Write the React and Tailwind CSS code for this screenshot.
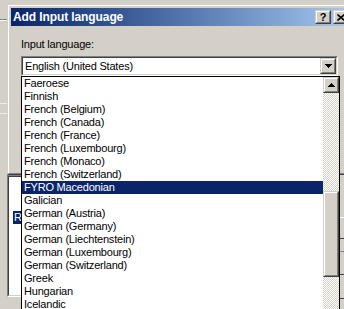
const languages = [
  "Faeroese",
  "Finnish",
  "French (Belgium)",
  "French (Canada)",
  "French (France)",
  "French (Luxembourg)",
  "French (Monaco)",
  "French (Switzerland)",
  "FYRO Macedonian",
  "Galician",
  "German (Austria)",
  "German (Germany)",
  "German (Liechtenstein)",
  "German (Luxembourg)",
  "German (Switzerland)",
  "Greek",
  "Hungarian",
  "Icelandic",
  "Indonesian",
];

const selected = "FYRO Macedonian";

// classic win2k raised edge: two nested 1px borders
const Raised = ({ className = "", children }) => (
  <div className={`border border-t-[#d4d0c8] border-l-[#d4d0c8] border-r-[#404040] border-b-[#404040] bg-[#d4d0c8] ${className}`}>
    <div className="w-full h-full border border-t-white border-l-white border-r-[#808080] border-b-[#808080] flex items-center justify-center">
      {children}
    </div>
  </div>
);

const Triangle = ({ up }) => (
  <svg width="7" height="4" viewBox="0 0 7 4" shapeRendering="crispEdges">
    {up ? (
      <g fill="#000">
        <rect x="3" y="0" width="1" height="1" />
        <rect x="2" y="1" width="3" height="1" />
        <rect x="1" y="2" width="5" height="1" />
        <rect x="0" y="3" width="7" height="1" />
      </g>
    ) : (
      <g fill="#000">
        <rect x="0" y="0" width="7" height="1" />
        <rect x="1" y="1" width="5" height="1" />
        <rect x="2" y="2" width="3" height="1" />
        <rect x="3" y="3" width="1" height="1" />
      </g>
    )}
  </svg>
);

const checker =
  "bg-[repeating-conic-gradient(#d4d0c8_0_25%,#ffffff_0_50%)] bg-[length:2px_2px]";

const App = () => {
  return (
    <div className="relative w-[344px] h-[309px] overflow-hidden bg-[#d4d0c8] text-black font-['Liberation_Sans',Arial,sans-serif] text-[11px] tracking-[-0.2px]">
      {/* bits of the window behind */}
      <div className="absolute left-0 top-[19px] w-[8px] h-[1px] bg-[#808080]" />
      <div className="absolute left-0 top-[20px] w-[8px] h-[1px] bg-white" />
      <div className="absolute left-0 top-[103px] w-[8px] h-[1px] bg-[#eeeeee]" />
      <div className="absolute left-0 top-[113px] w-[8px] h-[1px] bg-[#eeeeee]" />
      <div className="absolute left-[7px] top-[175px] w-[40px] h-[122px] border border-t-[#808080] border-l-[#808080] border-r-white border-b-white">
        <div className="w-full h-full bg-white border border-t-[#404040] border-l-[#404040] border-r-[#d4d0c8] border-b-[#d4d0c8] pt-[34px] pl-[4px]">
          <div className="w-[24px] h-[13px] leading-[13px] bg-[#0a246a] text-white pl-[1px]">R</div>
        </div>
      </div>
      <div className="absolute left-[340px] top-[217px] w-[4px] h-[1px] bg-white" />
      <div className="absolute left-[340px] top-[238px] w-[4px] h-[1px] bg-[#404040]" />
      <div className="absolute left-[340px] top-[251px] w-[4px] h-[1px] bg-[#808080]" />
      <div className="absolute left-[340px] top-[274px] w-[4px] h-[1px] bg-[#404040]" />
      <div className="absolute left-[340px] top-[298px] w-[4px] h-[1px] bg-[#404040]" />

      {/* Add Input language dialog */}
      <div className="absolute left-[7px] top-[4px] w-[348px] h-[171px] border border-t-[#d4d0c8] border-l-[#d4d0c8] border-r-[#404040] border-b-[#404040]">
        <div className="w-full h-full border border-t-white border-l-white border-r-[#808080] border-b-[#808080] p-[2px] flex flex-col">
          <div className="h-[18px] flex items-center pl-[2px] pr-[2px] bg-gradient-to-r from-[#0a246a] to-[#a6caf0]">
            <span className="flex-1 text-white font-bold text-[12px] tracking-[-0.1px] leading-[18px]">
              Add Input language
            </span>
            <Raised className="w-[16px] h-[14px]">
              <span className="font-bold text-[11px] leading-none tracking-normal">?</span>
            </Raised>
            <Raised className="w-[16px] h-[14px] ml-[2px]">
              <svg width="8" height="7" viewBox="0 0 8 7">
                <path d="M0.5 0.5 L7.5 6.5 M7.5 0.5 L0.5 6.5" stroke="#000" strokeWidth="1.6" />
              </svg>
            </Raised>
          </div>
          <div className="pt-[12px] pl-[10px]">
            <div className="h-[13px] leading-[13px]">Input language:</div>
            <div className="mt-[5px] w-[317px] h-[20px] border border-t-[#808080] border-l-[#808080] border-r-white border-b-white">
              <div className="w-full h-full bg-white border border-t-[#404040] border-l-[#404040] border-r-[#d4d0c8] border-b-[#d4d0c8] flex items-center">
                <span className="flex-1 pl-[2px] leading-[13px]">English (United States)</span>
                <Raised className="w-[16px] h-[16px]">
                  <Triangle />
                </Raised>
              </div>
            </div>
          </div>
        </div>
      </div>

      {/* open drop-down list */}
      <div className="absolute left-[21px] top-[76px] w-[319px] h-[245px] bg-white border border-black flex">
        <div className="flex-1 flex flex-col">
          {languages.map((lang) => (
            <div
              key={lang}
              className={`h-[13px] leading-[13px] pl-[2px] whitespace-nowrap ${
                lang === selected ? "bg-[#0a246a] text-white" : ""
              }`}
            >
              {lang}
            </div>
          ))}
        </div>
        <div className="w-[16px] flex flex-col">
          <Raised className="w-[16px] h-[16px]">
            <Triangle up />
          </Raised>
          <div className={`h-[98px] ${checker}`} />
          <Raised className="w-[16px] h-[86px]" />
          <div className={`flex-1 ${checker}`} />
        </div>
      </div>
    </div>
  );
};

export default App;
